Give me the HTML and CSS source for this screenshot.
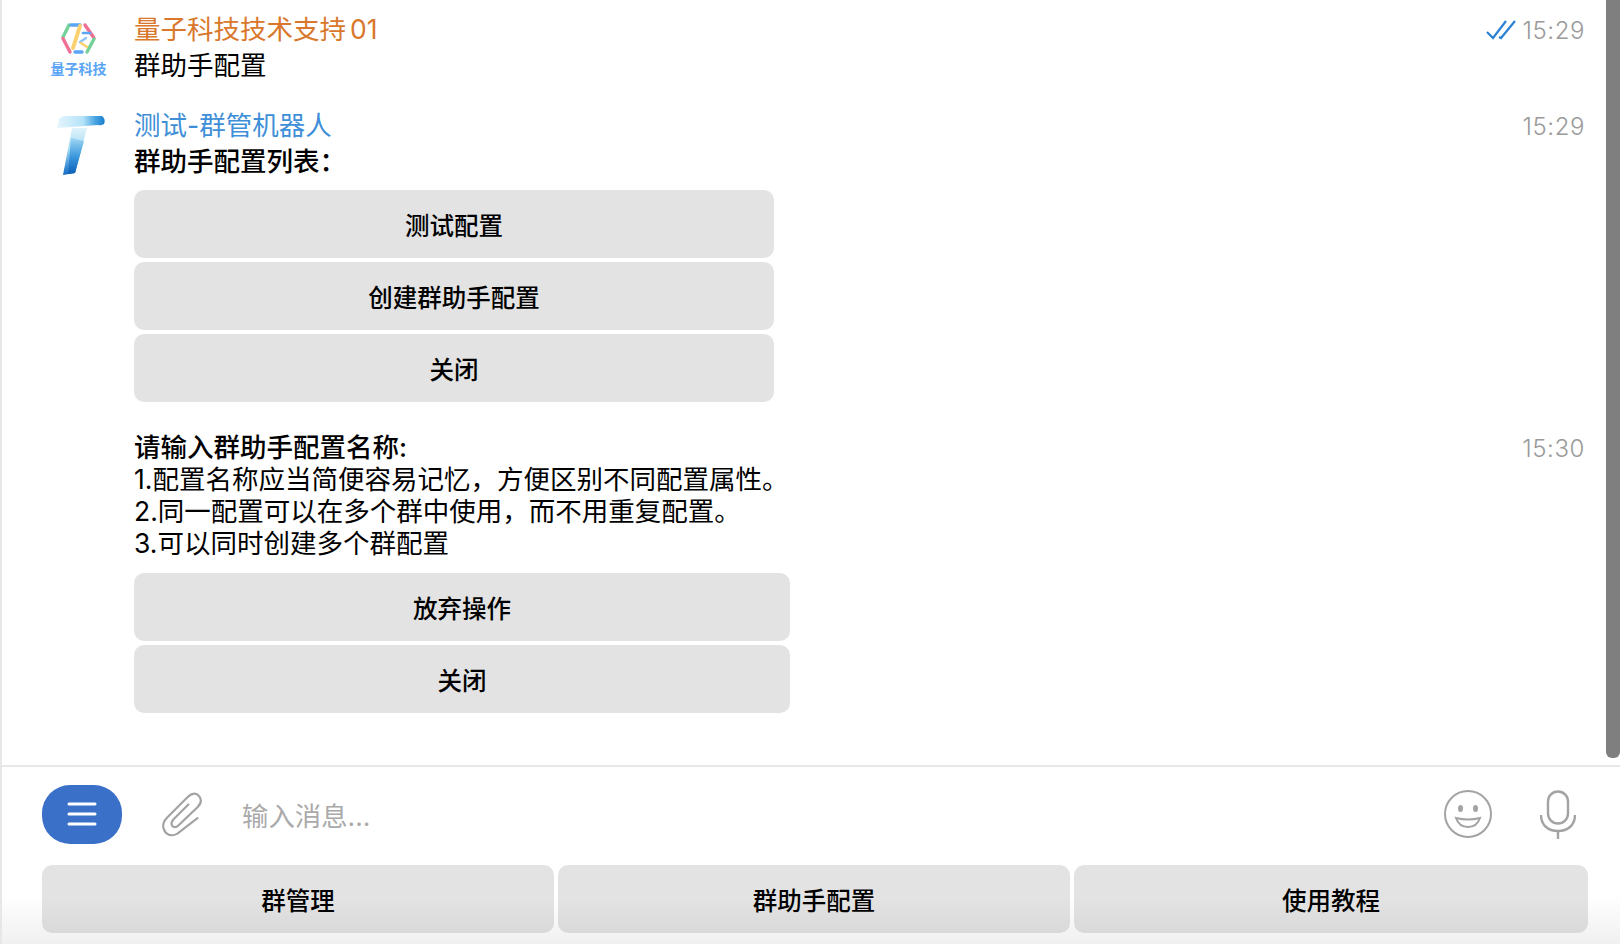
FILE: index.html
```html
<!DOCTYPE html>
<html lang="zh-CN">
<head>
  <meta charset="UTF-8">
  <title>群助手配置</title>
  <link rel="stylesheet" href="styles.css">
</head>
<body>
  <div id="app">
    <div id="chat">
      <!-- 用户消息 -->
      <div class="msg msg-first">
        <div class="avatar">
          <svg width="76" height="64" viewBox="0 0 76 64" fill="none">
            <g stroke-width="3.4" stroke-linecap="round" stroke-linejoin="round">
              <path d="M27 11 L21 23" stroke="#74d197"/>
              <path d="M21 24.5 L28 38" stroke="#ef7092"/>
              <path d="M29 11 H38" stroke="#5aa5f5"/>
              <path d="M33 38 H40" stroke="#5aa5f5"/>
              <path d="M43 11 L52 24" stroke="#ef7092"/>
              <path d="M52 25 L45 38" stroke="#74d197"/>
              <path d="M38 12 L31 34" stroke="#fbd06e" stroke-width="4"/>
              <path d="M41 19 H48" stroke="#5aa5f5" stroke-width="2.6"/>
              <path d="M38 28 L44 24" stroke="#8cc4f8" stroke-width="2.4"/>
              <path d="M39 29 L45 33" stroke="#fbd06e" stroke-width="2.4"/>
            </g>
            <text class="logo-text" x="36.5" y="60" text-anchor="middle">量子科技</text>
          </svg>
        </div>
        <div class="body">
          <div class="name name-orange">量子科技技术支持<span class="name-num">01</span></div>
          <div class="line">群助手配置</div>
        </div>
        <div class="time">
          <svg class="ticks" width="30" height="20" viewBox="0 0 30 20" fill="none" stroke="#2b82d4" stroke-width="2.2">
            <path d="M1 12 L7 18 L20 1"/>
            <path d="M13 17 L15 18 L29 1"/>
          </svg>
          15:29
        </div>
      </div>

      <!-- 机器人消息 -->
      <div class="msg msg-bot">
        <div class="avatar">
          <svg width="70" height="66" viewBox="0 0 70 66">
            <defs>
              <linearGradient id="top-bar" x1="0" y1="0" x2="1" y2="0">
                <stop offset="0" stop-color="#e4f5fd"/>
                <stop offset="0.55" stop-color="#b4e3f8"/>
                <stop offset="0.8" stop-color="#4aa4e2"/>
                <stop offset="1" stop-color="#1a7fd0"/>
              </linearGradient>
              <linearGradient id="stem" x1="0" y1="0" x2="0" y2="1">
                <stop offset="0" stop-color="#dff3fb"/>
                <stop offset="0.45" stop-color="#a4daf3"/>
                <stop offset="1" stop-color="#0f6ac4"/>
              </linearGradient>
              <linearGradient id="facet" x1="0" y1="0" x2="0" y2="1">
                <stop offset="0" stop-color="#9ed6f2"/>
                <stop offset="0.5" stop-color="#3f9ade"/>
                <stop offset="1" stop-color="#0a5fb8"/>
              </linearGradient>
            </defs>
            <path d="M17 6 Q19 3 24 3 H60 Q64 6 62 11 Q59 13 56 12 L15 15 Z" fill="url(#top-bar)"/>
            <path d="M30 15 H45 L33 60 L21 62 Z" fill="url(#stem)"/>
            <path d="M29 25 L42 28 L33 60 L26 61 Z" fill="url(#facet)"/>
          </svg>
        </div>
        <div class="body">
          <div class="name name-blue">测试-群管机器人</div>
          <div class="line line-bold">群助手配置列表：</div>
          <div class="keyboard keyboard-a">
            <div class="kbd-btn">测试配置</div>
            <div class="kbd-btn">创建群助手配置</div>
            <div class="kbd-btn">关闭</div>
          </div>
        </div>
        <div class="time">15:29</div>
      </div>

      <div class="msg msg-cont">
        <div class="avatar"></div>
        <div class="body">
          <div class="row line-bold">请输入群助手配置名称:</div>
          <div class="row">1.配置名称应当简便容易记忆，方便区别不同配置属性。</div>
          <div class="row">2.同一配置可以在多个群中使用，而不用重复配置。</div>
          <div class="row">3.可以同时创建多个群配置</div>
          <div class="keyboard keyboard-b">
            <div class="kbd-btn">放弃操作</div>
            <div class="kbd-btn">关闭</div>
          </div>
        </div>
        <div class="time">15:30</div>
      </div>

      <div id="scrollbar"></div>
    </div>

    <div id="composer">
      <div class="menu-btn">
        <svg width="30" height="24" viewBox="0 0 30 24" stroke="#fff" stroke-width="3" stroke-linecap="round">
          <path d="M2 2 H28"/>
          <path d="M2 12 H28"/>
          <path d="M2 22 H28"/>
        </svg>
      </div>
      <svg class="clip" width="40" height="47" viewBox="0 0 44 50" fill="none" stroke="#a3a3a3" stroke-width="2.4" stroke-linecap="round">
        <path d="M39 29 L17 46 C10 50 4 47 2 41 C0 36 2 32 6 28 L28 6 C33 1 38 1 41 5 C44 9 43 13 39 17 L18 37 C15 40 12 39 11 37 C10 35 10 33 13 30 L29 14"/>
      </svg>
      <div class="placeholder">输入消息...</div>
      <svg class="smile" width="48" height="48" viewBox="0 0 48 48" fill="none" stroke="#a3a3a3" stroke-width="2">
        <circle cx="24" cy="24" r="23"/>
        <ellipse cx="16.5" cy="18.5" rx="2.5" ry="3.5" fill="#a3a3a3" stroke="none"/>
        <ellipse cx="31.5" cy="18.5" rx="2.5" ry="3.5" fill="#a3a3a3" stroke="none"/>
        <path d="M12 28 Q24 31 36 28 Q33 37 24 37 Q15 37 12 28 Z"/>
      </svg>
      <svg class="mic" width="36" height="50" viewBox="0 0 36 50" fill="none" stroke="#a3a3a3" stroke-width="2.4">
        <rect x="8" y="1.5" width="20" height="32" rx="10"/>
        <path d="M1 25 C1 35 8 41 18 41 C28 41 35 35 35 25"/>
        <path d="M18 41 V49"/>
      </svg>
    </div>

    <div id="reply-keyboard">
      <div class="reply-btn">群管理</div>
      <div class="reply-btn">群助手配置</div>
      <div class="reply-btn">使用教程</div>
    </div>
  </div>
</body>
</html>
```

FILE: styles.css
```css
html, body { margin:0; padding:0; height:100%; overflow:hidden; }
body { font-family:"Inter","Noto Sans CJK SC",sans-serif; background:#fff; color:#000; }
#app { display:flex; flex-direction:column; width:1620px; height:944px; box-sizing:border-box; border-left:2px solid #e7e7e7; background:linear-gradient(to bottom,#fff 0,#fff 896px,#f0f0f0 944px); }

/* 消息区 */
#chat { position:relative; height:767px; flex:none; box-sizing:border-box; border-bottom:2px solid #e8e8e8; background:#fff; }
#scrollbar { position:absolute; top:0; right:0; width:14px; height:758px; background:#7f7f7f; border-radius:0 0 6px 6px; }

.msg { display:flex; padding-left:40px; padding-right:35px; }
.msg-first { padding-top:11px; }
.msg-bot { padding-top:24px; }
.msg-cont { padding-top:29px; }

.avatar { width:92px; flex:none; display:flex; align-items:flex-start; }
.msg-first .avatar svg { margin-top:3px; }
.msg-bot .avatar svg { margin-top:6px; }
.logo-text { font:700 14px "Noto Sans CJK SC",sans-serif; fill:#5aa5f5; }

.body { flex:1; min-width:0; font-size:26.5px; }
.name { line-height:36px; }
.name-orange { color:#d9782c; }
.name-blue { color:#3f8fd8; }
.name-num { margin-left:4px; }
.line { line-height:36px; }
.row { line-height:32px; }
.line-bold { font-weight:500; }

.time { display:flex; align-items:center; height:36px; box-sizing:border-box; padding-top:2px; font-size:24px; font-weight:300; color:#9a9a9a; letter-spacing:.6px; }
.msg-cont .time { height:32px; }
.ticks { margin-right:6px; }

.keyboard { display:flex; flex-direction:column; gap:4px; }
.keyboard-a { width:640px; margin-top:11px; }
.keyboard-b { width:656px; margin-top:14px; }
.kbd-btn { height:68px; display:flex; align-items:center; justify-content:center; background:#e3e3e3; border-radius:10px; font-size:24.5px; font-weight:500; }

/* 输入区 */
#composer { display:flex; align-items:center; height:98px; flex:none; box-sizing:border-box; padding:0 34px 4px 40px; }
.menu-btn { width:80px; height:59px; display:flex; align-items:center; justify-content:center; background:#3b70c8; border-radius:28px; }
.clip { margin-left:40px; }
.placeholder { flex:1; margin-left:40px; font-size:26.4px; color:#aaa; }
.smile { margin-right:48px; }
.mic { margin-right:10px; margin-top:2px; }

/* 底部键盘 */
#reply-keyboard { display:grid; grid-template-columns:512px 512px 1fr; gap:4px; padding:0 32px 0 40px; }
.reply-btn { height:68px; display:flex; align-items:center; justify-content:center; border-radius:10px; background:linear-gradient(to bottom,#e3e3e3 0,#e3e3e3 50%,#d9d9d9 100%); font-size:24.5px; font-weight:500; }
```
